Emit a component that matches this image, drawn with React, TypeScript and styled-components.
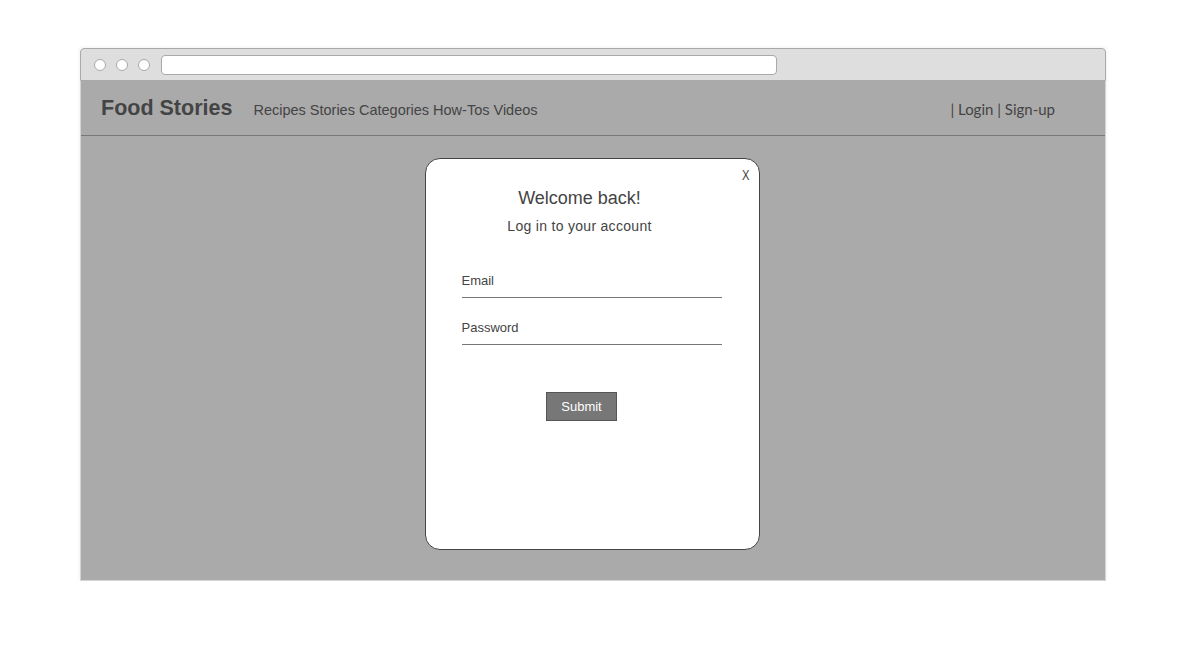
import React from 'react';
import styled, { createGlobalStyle } from 'styled-components';

const GlobalStyle = createGlobalStyle`
  html, body {
    margin: 0;
    padding: 0;
    background: #fff;
    font-family: 'Liberation Sans', Arial, sans-serif;
  }
`;

const Page = styled.div`
  padding: 48px 0 0 80px;
`;

const BrowserWindow = styled.div`
  width: 1026px;
  display: flex;
  flex-direction: column;
  box-shadow: 0 0 4px rgba(0, 0, 0, 0.08);
`;

const TitleBar = styled.div`
  height: 31px;
  background: #dedede;
  border: 1px solid #a9a9a9;
  border-radius: 4px 4px 0 0;
  display: flex;
  align-items: center;
  padding-left: 13px;
  gap: 10px;
`;

const Dot = styled.span`
  width: 12px;
  height: 12px;
  border-radius: 50%;
  background: #fff;
  border: 1px solid #a9a9a9;
  box-sizing: border-box;
`;

const AddressBar = styled.div`
  width: 616px;
  height: 20px;
  box-sizing: border-box;
  margin-left: 1px;
  background: #fff;
  border: 1px solid #a9a9a9;
  border-radius: 4px;
`;

const Viewport = styled.div`
  height: 499px;
  background: #aaaaaa;
  border: 1px solid #d4d4d4;
  border-top: none;
  display: flex;
  flex-direction: column;
`;

const NavBar = styled.header`
  height: 55px;
  box-sizing: border-box;
  border-bottom: 1px solid #777;
  display: flex;
  align-items: baseline;
  padding: 15px 50px 0 20px;
  color: #444;
`;

const Brand = styled.h1`
  margin: 0;
  font-size: 21.5px;
  font-weight: bold;
  color: #444;
`;

const NavLinks = styled.nav`
  margin-left: 21px;
  font-size: 14.5px;
  display: flex;
  gap: 4px;
`;

const NavLink = styled.a`
  color: #444;
  text-decoration: none;
`;

const AuthLinks = styled.div`
  margin-left: auto;
  font-family: 'Lato', 'Liberation Sans', sans-serif;
  font-size: 15px;
  color: #444;
`;

const Stage = styled.div`
  flex: 1;
  display: flex;
  justify-content: center;
  padding: 22px 2px 0 0;
`;

const Modal = styled.div`
  position: relative;
  width: 335px;
  height: 392px;
  box-sizing: border-box;
  background: #fff;
  border: 1px solid #444;
  border-radius: 15px;
  padding: 29px 37px 0 36px;
  display: flex;
  flex-direction: column;
  color: #444;
`;

const CloseButton = styled.button`
  position: absolute;
  top: 8px;
  right: 8px;
  border: none;
  background: none;
  padding: 0;
  font-family: 'Liberation Sans', Arial, sans-serif;
  font-size: 14px;
  color: #444;
  transform: scaleX(0.8);
  cursor: pointer;
`;

const Heading = styled.h2`
  margin: 0;
  padding-right: 24px;
  text-align: center;
  font-size: 18px;
  font-weight: normal;
  line-height: 21px;
`;

const SubHeading = styled.p`
  margin: 9px 0 0;
  padding-right: 24px;
  text-align: center;
  font-size: 14px;
  letter-spacing: 0.3px;
  line-height: 16px;
`;

const Form = styled.form`
  display: flex;
  flex-direction: column;
  margin-top: 39px;
`;

const Field = styled.label<{ $gap?: number }>`
  display: block;
  margin-top: ${({ $gap }) => $gap ?? 0}px;
  padding-bottom: 9px;
  border-bottom: 1px solid #777;
  font-size: 13px;
  line-height: 15px;
  color: #444;
`;

const SubmitButton = styled.button`
  align-self: center;
  margin: 47px 0 0 -20px;
  width: 71px;
  height: 29px;
  background: #777;
  border: 1px solid #555;
  color: #fff;
  font-family: 'Liberation Sans', Arial, sans-serif;
  font-size: 13px;
  padding: 0;
`;

const links = ['Recipes', 'Stories', 'Categories', 'How-Tos', 'Videos'];

const App = () => {
  return (
    <>
      <GlobalStyle />
      <Page>
        <BrowserWindow>
          <TitleBar>
            <Dot />
            <Dot />
            <Dot />
            <AddressBar />
          </TitleBar>
          <Viewport>
            <NavBar>
              <Brand>Food Stories</Brand>
              <NavLinks>
                {links.map((l) => (
                  <NavLink key={l}>{l}</NavLink>
                ))}
              </NavLinks>
              <AuthLinks>| Login | Sign-up</AuthLinks>
            </NavBar>
            <Stage>
              <Modal>
                <CloseButton type="button">X</CloseButton>
                <Heading>Welcome back!</Heading>
                <SubHeading>Log in to your account</SubHeading>
                <Form onSubmit={(e) => e.preventDefault()}>
                  <Field>Email</Field>
                  <Field $gap={22}>Password</Field>
                  <SubmitButton type="submit">Submit</SubmitButton>
                </Form>
              </Modal>
            </Stage>
          </Viewport>
        </BrowserWindow>
      </Page>
    </>
  );
};

export default App;
